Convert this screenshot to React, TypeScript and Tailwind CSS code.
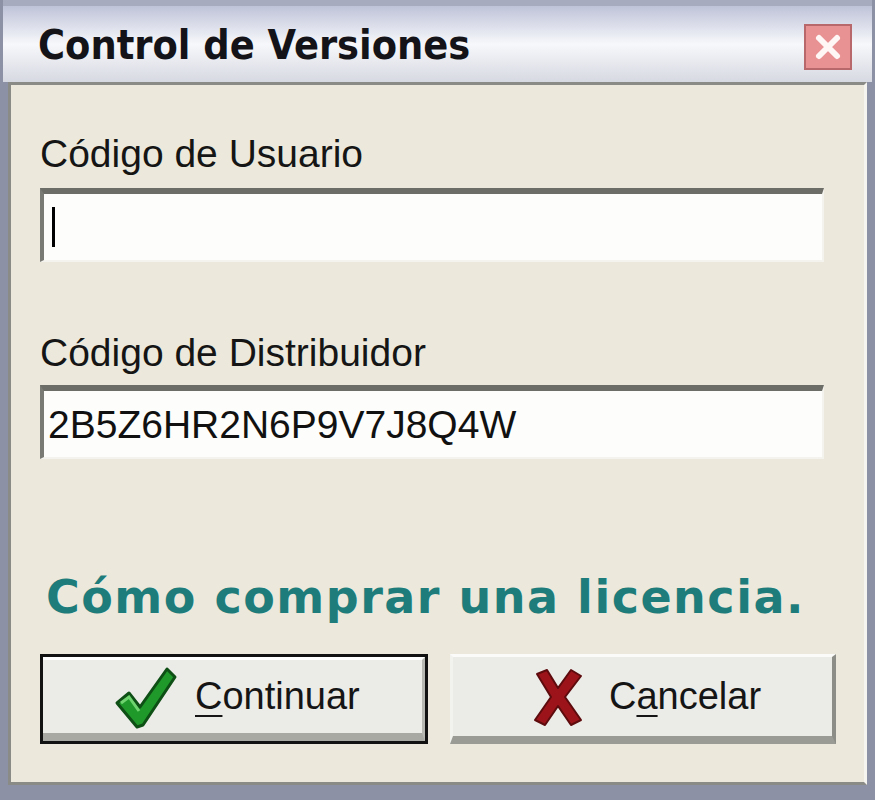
const sans = { fontFamily: '"Liberation Sans", Arial, sans-serif' };

const CheckIcon = () => (
  <svg width="66" height="68" viewBox="0 0 66 68">
    <path
      d="M4 40 L16 30 L27 44 L54 6 L62 14 L30 62 L24 64 Z"
      fill="#1f9a2a"
      stroke="#0d4f14"
      strokeWidth="3"
      strokeLinejoin="round"
    />
    <path d="M8 40 L16 34 L26 48" fill="none" stroke="#6fd46f" strokeWidth="3" />
  </svg>
);

const CrossIcon = () => (
  <svg width="54" height="62" viewBox="0 0 54 62">
    <path
      d="M6 8 L16 4 L27 22 L40 4 L50 10 L34 31 L50 54 L40 59 L27 40 L14 59 L4 54 L20 31 Z"
      fill="#9c1419"
      stroke="#5e0b0e"
      strokeWidth="2"
      strokeLinejoin="round"
    />
  </svg>
);

const Field = ({ value, caret }: { value?: string; caret?: boolean }) => (
  <div className="w-[784px] h-[74px] border-t-[6px] border-l-[4px] border-r-2 border-b-2 border-t-[#6d6d68] border-l-[#7a7a74] border-r-[#f4f3ee] border-b-[#f4f3ee] bg-[#fdfdfb] flex items-center pl-[4px]">
    {caret && <div className="w-[3px] h-[40px] bg-black ml-[4px]" />}
    {value && (
      <span className="text-[39px] leading-none text-[#111]" style={sans}>
        {value}
      </span>
    )}
  </div>
);

export default function App() {
  return (
    <div className="w-[875px] h-[800px] bg-[#8d91a6] p-[3px] pt-0 flex flex-col">
      {/* title bar */}
      <div className="h-[82px] shrink-0 flex items-center justify-between pl-[35px] pr-[20px] border-t-[6px] border-[#a7abbe] bg-gradient-to-b from-[#bfc3d8] via-[#f7f8fb] to-[#d7d9e2]">
        <span
          className="text-[41px] font-bold text-[#141418] mt-[4px]"
          style={{ fontFamily: '"DejaVu Sans Condensed", "DejaVu Sans", sans-serif' }}
        >
          Control de Versiones
        </span>
        <div className="w-[48px] h-[46px] mt-[6px] bg-[#e89294] border-2 border-[#b8676a] flex items-center justify-center">
          <svg width="28" height="28" viewBox="0 0 28 28">
            <path d="M5 5 L23 23 M23 5 L5 23" stroke="#fff6f6" strokeWidth="6" strokeLinecap="round" />
          </svg>
        </div>
      </div>

      {/* client area */}
      <div className="flex-1 mx-[5px] mb-[12px] border-[3px] border-t-[#8a8a86] border-l-[#8a8a86] border-r-[#f5f4ef] border-b-[#8a8a86] bg-[#ece9dc] pl-[29px] pt-[47px]">
        <div className="text-[39px] leading-[44px] text-[#151515] h-[50px]" style={sans}>
          Código de Usuario
        </div>
        <div className="mt-[6px]">
          <Field caret />
        </div>

        <div className="text-[39px] leading-[44px] text-[#151515] mt-[69px] h-[50px]" style={sans}>
          Código de Distribuidor
        </div>
        <div className="mt-[4px]">
          <Field value="2B5Z6HR2N6P9V7J8Q4W" />
        </div>

        <div
          className="mt-[110px] ml-[6px] text-[46px] leading-[56px] font-bold text-[#1e7d7b] tracking-[1.5px]"
          style={{ fontFamily: '"DejaVu Sans", Verdana, sans-serif' }}
        >
          Cómo comprar una licencia.
        </div>

        <div className="mt-[29px] flex gap-[22px]">
          <button className="w-[388px] h-[90px] border-[3px] border-[#121212] bg-[#ebebe8] flex items-stretch">
            <div className="flex-1 border-t-[3px] border-t-white border-b-[8px] border-b-[#a9a9a3] border-r-[3px] border-r-[#b8b8b2] flex items-center pl-[70px] gap-[16px]">
              <CheckIcon />
              <span className="text-[38px] text-[#151515]" style={sans}>
                <span className="underline underline-offset-[6px] decoration-2">C</span>ontinuar
              </span>
            </div>
          </button>
          <button className="w-[386px] h-[90px] bg-[#ebebe8] border-t-[3px] border-l-[3px] border-t-[#fbfbf9] border-l-[#f2f2ef] border-r-[4px] border-r-[#8d8d88] border-b-[8px] border-b-[#9b9b96] flex items-center pl-[78px] gap-[24px]">
            <CrossIcon />
            <span className="text-[38px] text-[#151515]" style={sans}>
              C<span className="underline underline-offset-[6px] decoration-2">a</span>ncelar
            </span>
          </button>
        </div>
      </div>
    </div>
  );
}
